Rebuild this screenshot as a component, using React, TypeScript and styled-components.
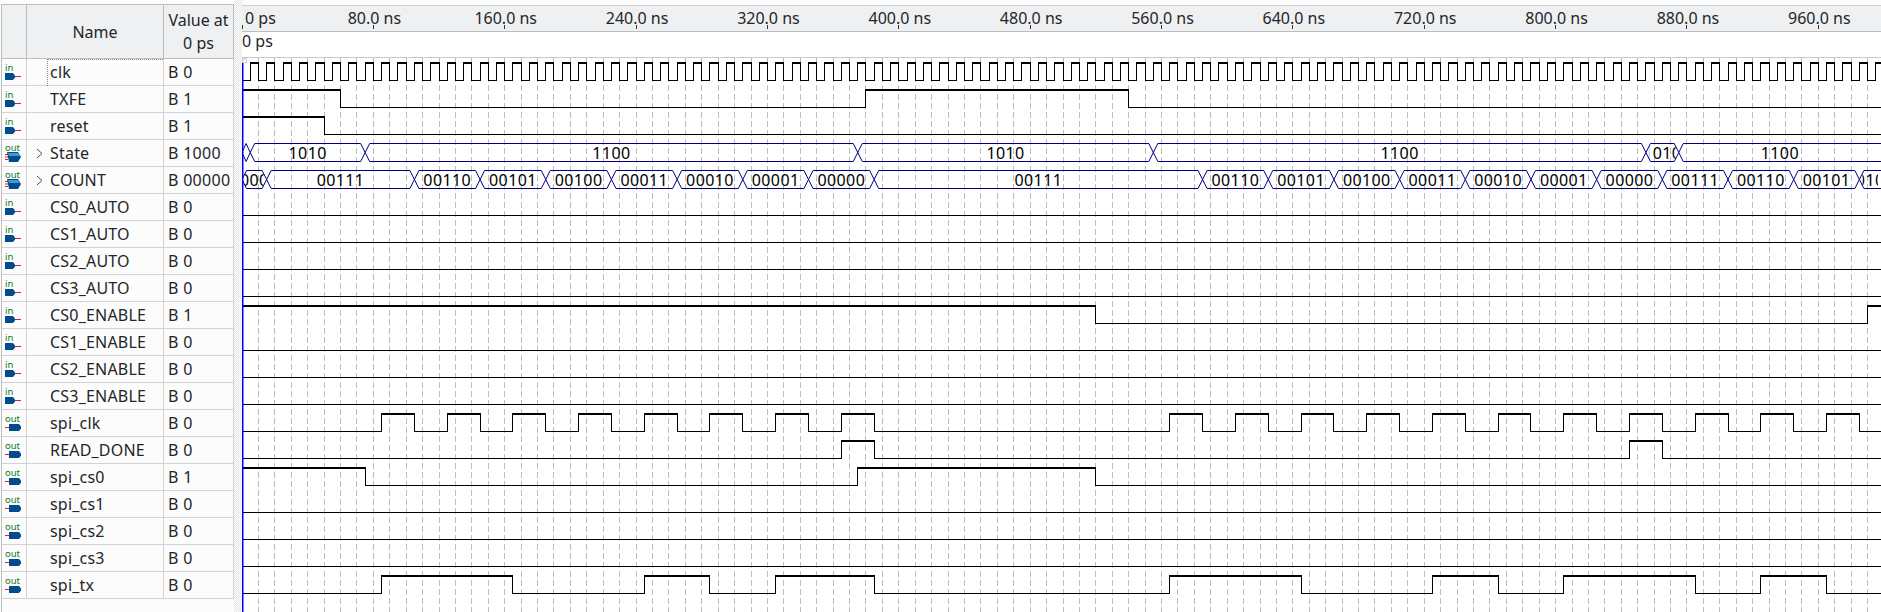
import React from "react";
import styled, { createGlobalStyle } from "styled-components";

const GlobalStyle = createGlobalStyle`
  html, body {
    margin: 0;
    padding: 0;
    overflow: hidden;
    background: #fcfcfc;
  }
`;

// Waveform scale, taken from the 80 ns ruler spacing
const PX_PER_NS = 1.642;
const WAVE_WIDTH = 1639;
const WAVE_HEIGHT = 554;
const ROW_HEIGHT = 27;
const END_NS = 1010;

const xAt = (ns: number) => ns * PX_PER_NS;
const snap = (ns: number) => Math.floor(xAt(ns)) + 0.5;

type PinKind = "in" | "out" | "bus";

type Signal = {
  name: string;
  value: string;
  pin: PinKind;
  // logic signal: starting level and the times it toggles
  start?: 0 | 1;
  edges?: number[];
  // bus signal: segment start times and what each one shows
  bus?: { at: number; label: string }[];
};

const range = (from: number, to: number, step: number) => {
  const out: number[] = [];
  for (let t = from; t <= to; t += step) out.push(t);
  return out;
};

const pulses = (rises: number[], width: number) =>
  rises.flatMap((t) => [t, t + width]);

const spiClkEdges = pulses(
  [...range(85, 365, 40), ...range(565, 965, 40)],
  20
);

const signals: Signal[] = [
  { name: "clk", value: "B 0", pin: "in", start: 0, edges: range(5, END_NS, 5) },
  { name: "TXFE", value: "B 1", pin: "in", start: 1, edges: [60, 380, 540] },
  { name: "reset", value: "B 1", pin: "in", start: 1, edges: [50] },
  {
    name: "State",
    value: "B 1000",
    pin: "bus",
    bus: [
      { at: 0, label: "" },
      { at: 5, label: "1010" },
      { at: 75, label: "1100" },
      { at: 375, label: "1010" },
      { at: 555, label: "1100" },
      { at: 855, label: "1010" },
      { at: 875, label: "1100" },
    ],
  },
  {
    name: "COUNT",
    value: "B 00000",
    pin: "bus",
    bus: [
      { at: 0, label: "00000" },
      { at: 15, label: "00111" },
      { at: 105, label: "00110" },
      { at: 145, label: "00101" },
      { at: 185, label: "00100" },
      { at: 225, label: "00011" },
      { at: 265, label: "00010" },
      { at: 305, label: "00001" },
      { at: 345, label: "00000" },
      { at: 385, label: "00111" },
      { at: 585, label: "00110" },
      { at: 625, label: "00101" },
      { at: 665, label: "00100" },
      { at: 705, label: "00011" },
      { at: 745, label: "00010" },
      { at: 785, label: "00001" },
      { at: 825, label: "00000" },
      { at: 865, label: "00111" },
      { at: 905, label: "00110" },
      { at: 945, label: "00101" },
      { at: 985, label: "00100" },
    ],
  },
  { name: "CS0_AUTO", value: "B 0", pin: "in", start: 0 },
  { name: "CS1_AUTO", value: "B 0", pin: "in", start: 0 },
  { name: "CS2_AUTO", value: "B 0", pin: "in", start: 0 },
  { name: "CS3_AUTO", value: "B 0", pin: "in", start: 0 },
  { name: "CS0_ENABLE", value: "B 1", pin: "in", start: 1, edges: [520, 990] },
  { name: "CS1_ENABLE", value: "B 0", pin: "in", start: 0 },
  { name: "CS2_ENABLE", value: "B 0", pin: "in", start: 0 },
  { name: "CS3_ENABLE", value: "B 0", pin: "in", start: 0 },
  { name: "spi_clk", value: "B 0", pin: "out", start: 0, edges: spiClkEdges },
  { name: "READ_DONE", value: "B 0", pin: "out", start: 0, edges: [365, 385, 845, 865] },
  { name: "spi_cs0", value: "B 1", pin: "out", start: 1, edges: [75, 375, 520] },
  { name: "spi_cs1", value: "B 0", pin: "out", start: 0 },
  { name: "spi_cs2", value: "B 0", pin: "out", start: 0 },
  { name: "spi_cs3", value: "B 0", pin: "out", start: 0 },
  {
    name: "spi_tx",
    value: "B 0",
    pin: "out",
    start: 0,
    edges: [85, 165, 245, 285, 325, 385, 565, 645, 725, 765, 805, 885, 925, 965],
  },
];

const rulerLabels = range(80, 960, 80);

// Styled components
const Page = styled.div`
  display: flex;
  width: 1881px;
  height: 612px;
  overflow: hidden;
  background: #fcfcfc;
  color: #232629;
  font-family: "Noto Sans", sans-serif;
  font-size: 16px;
`;

const NodeTable = styled.div`
  width: 232px;
  margin: 4px 0 0 1px;
  border-left: 1px solid #bcbebf;
  display: flex;
  flex-direction: column;
  flex-shrink: 0;
`;

const HeaderRow = styled.div`
  display: grid;
  grid-template-columns: 25px 137px 70px;
  height: 55px;
  box-sizing: border-box;
  border-top: 1px solid #bcbebf;
  border-bottom: 1px solid #bcbebf;
  background: #eff0f1;
`;

const HeaderCell = styled.div`
  display: flex;
  align-items: center;
  justify-content: center;
  text-align: center;
  line-height: 23px;
  padding-top: 1px;
  border-right: 1px solid #bcbebf;
`;

const NodeRow = styled.div`
  display: grid;
  grid-template-columns: 25px 137px 70px;
  height: ${ROW_HEIGHT}px;
  box-sizing: border-box;
  border-bottom: 1px solid #d1d2d3;
`;

const PinCell = styled.div`
  border-right: 1px solid #d1d2d3;
  display: flex;
`;

const NameCell = styled.div<{ $focused?: boolean }>`
  position: relative;
  display: flex;
  align-items: center;
  padding-left: 23px;
  letter-spacing: 0.2px;
  border-right: 1px solid #d1d2d3;

  ${(props) =>
    props.$focused &&
    `
    &::before {
      content: "";
      position: absolute;
      left: 20px;
      top: 0;
      right: 0;
      bottom: -1px;
      border-top: 1px dotted #8a8a8a;
      border-left: 1px dotted #8a8a8a;
    }
  `}
`;

const Expander = styled.svg`
  position: absolute;
  left: 9px;
  top: 8px;
`;

const ValueCell = styled.div`
  display: flex;
  align-items: center;
  padding-left: 4px;
  letter-spacing: 0.3px;
  border-right: 1px solid #d1d2d3;
  white-space: nowrap;
`;

const Splitter = styled.div`
  width: 8px;
  flex-shrink: 0;
  background-image: repeating-conic-gradient(#e6e7e8 0 25%, #fcfcfc 0 50%);
  background-size: 2px 2px;
`;

const WavePanel = styled.div`
  flex: 1;
  min-width: 0;
  padding-top: 5px;
  display: flex;
  flex-direction: column;
`;

const Ruler = styled.div`
  height: 27px;
  box-sizing: border-box;
  border-top: 1px solid #d0d1d2;
  border-bottom: 1px solid #bcbebf;
  background: #eff0f1;
`;

const RulerSvg = styled.svg`
  display: block;
  font-family: "Noto Sans", sans-serif;
  font-size: 16px;
  fill: #232629;
`;

const TimeBar = styled.div`
  height: 26px;
  box-sizing: border-box;
  line-height: 18px;
  background: #ffffff;
  border-bottom: 1px solid #c8c9ca;
`;

const WaveSvg = styled.svg`
  display: block;
  background: #ffffff;
  font-family: "Noto Sans", sans-serif;
  font-size: 16px;
  letter-spacing: 0.4px;
`;

const PinSvg = styled.svg`
  display: block;
  font-family: "Noto Sans", sans-serif;
  font-size: 9.5px;
`;

// Node type icon next to each row
const PinIcon: React.FC<{ kind: PinKind }> = ({ kind }) => (
  <PinSvg width={24} height={26} viewBox="0 0 24 26">
    {kind === "in" && (
      <>
        <text x={3} y={12} fill="#0b7a1e">in</text>
        <path d="M3 14h8l2 2.5v2L11 21H3z" fill="#004c8c" />
        <rect x={13} y={17} width={6} height={1} fill="#e0202c" />
      </>
    )}
    {kind === "out" && (
      <>
        <text x={3} y={12} fill="#0b7a1e">out</text>
        <rect x={3} y={17} width={6} height={1} fill="#e0202c" />
        <path d="M7 14h10l2 2.5v2L17 21H7z" fill="#004c8c" />
      </>
    )}
    {kind === "bus" && (
      <>
        <text x={3} y={11} fill="#0b7a1e">out</text>
        <path d="M3 14h3v1H3zM3 16.5h3v1H3zM3 19h3v1H3z" fill="#e0202c" />
        <path d="M5 12h11l3 5-3 5H7z" fill="#004c8c" />
        <path d="M6 13h10l2 3H7z" fill="#3f9bd8" />
      </>
    )}
  </PinSvg>
);

const LogicWave: React.FC<{ signal: Signal; row: number }> = ({ signal, row }) => {
  const top = row * ROW_HEIGHT;
  const highY = top + 5;
  const lowY = top + 22.5;
  const times = [0, ...(signal.edges ?? []), END_NS];
  let high = "";
  let low = "";
  let edges = "";
  let level = signal.start ?? 0;

  for (let i = 0; i < times.length - 1; i++) {
    const x0 = i === 0 ? 0 : snap(times[i]) - 0.5;
    const x1 = snap(times[i + 1]) + 0.5;
    if (level) high += `M${x0} ${highY}H${x1}`;
    else low += `M${x0} ${lowY}H${x1}`;
    if (i < times.length - 2) edges += `M${snap(times[i + 1])} ${top + 4}V${top + 23}`;
    level = level ? 0 : 1;
  }

  return (
    <g fill="none" stroke="#000000" shapeRendering="crispEdges">
      <path d={low} />
      <path d={edges} />
      <path d={high} strokeWidth={2} />
    </g>
  );
};

const BusWave: React.FC<{ signal: Signal; row: number }> = ({ signal, row }) => {
  const top = row * ROW_HEIGHT + 4.5;
  const bottom = row * ROW_HEIGHT + 22.5;
  const mid = (top + bottom) / 2;
  const segments = signal.bus ?? [];

  return (
    <g>
      {segments.map((seg, i) => {
        const x0 = xAt(seg.at);
        const x1 = i + 1 < segments.length ? xAt(segments[i + 1].at) : WAVE_WIDTH + 20;
        const slant = Math.min(4.5, (x1 - x0) / 2);
        const clipId = `bus-${row}-${i}`;
        const visibleEnd = Math.min(x1, WAVE_WIDTH);
        return (
          <g key={clipId}>
            <path
              d={`M${x0} ${mid}L${x0 + slant} ${top}H${x1 - slant}L${x1} ${mid}L${x1 - slant} ${bottom}H${x0 + slant}Z`}
              fill="none"
              stroke="#00007f"
            />
            <clipPath id={clipId}>
              <rect x={x0 + 3} y={top} width={Math.max(visibleEnd - x0 - 6, 0)} height={18} />
            </clipPath>
            <text
              x={(x0 + visibleEnd) / 2}
              y={row * ROW_HEIGHT + 20}
              textAnchor="middle"
              fill="#000000"
              clipPath={`url(#${clipId})`}
            >
              {seg.label}
            </text>
          </g>
        );
      })}
    </g>
  );
};

const App: React.FC = () => {
  return (
    <Page>
      <GlobalStyle />
      <NodeTable>
        <HeaderRow>
          <HeaderCell />
          <HeaderCell>Name</HeaderCell>
          <HeaderCell>Value at<br />0 ps</HeaderCell>
        </HeaderRow>
        {signals.map((signal, i) => (
          <NodeRow key={signal.name}>
            <PinCell>
              <PinIcon kind={signal.pin} />
            </PinCell>
            <NameCell $focused={i === 0}>
              {signal.bus && (
                <Expander width={8} height={11} viewBox="0 0 8 11">
                  <path d="M1 1l5 4.5-5 4.5" fill="none" stroke="#4d4d4d" />
                </Expander>
              )}
              {signal.name}
            </NameCell>
            <ValueCell>{signal.value}</ValueCell>
          </NodeRow>
        ))}
      </NodeTable>
      <Splitter />
      <WavePanel>
        <Ruler>
          <RulerSvg width={WAVE_WIDTH} height={25}>
            <text x={3} y={18}>0 ps</text>
            <rect x={0} y={19} width={1} height={4} fill="#31363b" />
            {rulerLabels.map((ns) => (
              <g key={ns}>
                <text x={xAt(ns) + 1} y={18} textAnchor="middle">
                  {`${ns.toFixed(1)} ns`}
                </text>
                <rect x={Math.floor(xAt(ns))} y={19} width={1} height={4} fill="#31363b" />
              </g>
            ))}
          </RulerSvg>
        </Ruler>
        <TimeBar>0 ps</TimeBar>
        <WaveSvg width={WAVE_WIDTH} height={WAVE_HEIGHT}>
          {range(10, END_NS, 10).map((ns) => (
            <line
              key={ns}
              x1={snap(ns)}
              x2={snap(ns)}
              y1={0}
              y2={WAVE_HEIGHT}
              stroke="#bdbdbd"
              strokeDasharray="6 3"
              shapeRendering="crispEdges"
            />
          ))}
          {signals.map((signal, i) =>
            signal.bus ? (
              <BusWave key={signal.name} signal={signal} row={i} />
            ) : (
              <LogicWave key={signal.name} signal={signal} row={i} />
            )
          )}
          <rect x={0} y={5} width={1.5} height={WAVE_HEIGHT} fill="#0000ff" />
          <rect x={0.5} y={0.5} width={4} height={4} fill="#f4f4f4" stroke="#d0d0d0" />
        </WaveSvg>
      </WavePanel>
    </Page>
  );
};

export default App;
